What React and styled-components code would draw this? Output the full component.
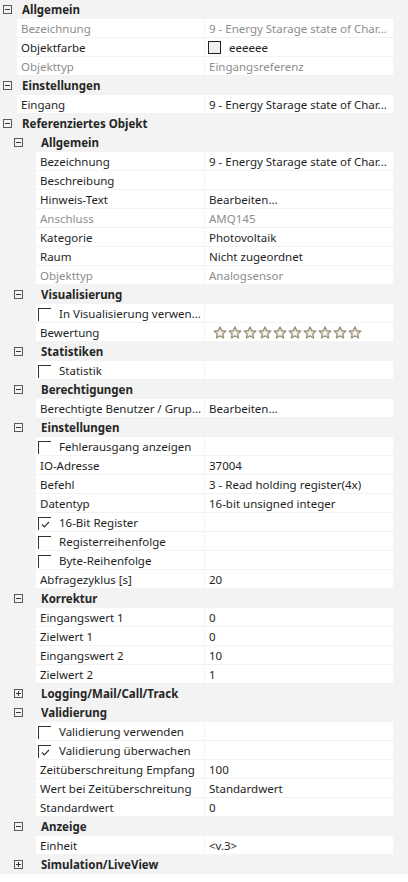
import styled, { createGlobalStyle } from "styled-components";

const GlobalStyle = createGlobalStyle`
  html, body {
    margin: 0;
    padding: 0;
    background: #f3f3f3;
  }
  body {
    font-family: 'Noto Sans', 'Open Sans', sans-serif;
    font-size: 11.5px;
    color: #1e1e1e;
  }
`;

const Grid = styled.div`
  width: 408px;
  height: 882px;
  overflow: hidden;
  display: flex;
  flex-direction: column;
  background: #f3f3f3;
`;

const Row = styled.div`
  display: flex;
  height: 19px;
  width: 393px;
  flex-shrink: 0;
`;

const Gutter = styled.div`
  width: ${({ indent }) => indent}px;
  flex-shrink: 0;
  display: flex;
  align-items: center;
  justify-content: center;
  padding-right: ${({ header }) => (header ? 3 : 0)}px;
  box-sizing: border-box;
`;

const HeaderLabel = styled.div`
  flex: 1;
  display: flex;
  align-items: center;
  font-weight: 700;
  color: #262626;
  padding-left: 5px;
  height: 18px;
  white-space: nowrap;
`;

const LabelCell = styled.div`
  flex: 1;
  min-width: 0;
  height: 18px;
  background: #fff;
  display: flex;
  align-items: center;
  padding-left: 4px;
  white-space: nowrap;
  overflow: hidden;
  color: ${({ disabled }) => (disabled ? "#8d8d8d" : "#1e1e1e")};
`;

const ValueCell = styled.div`
  width: 188px;
  flex-shrink: 0;
  margin-left: 1px;
  height: 18px;
  background: #fff;
  display: flex;
  align-items: center;
  padding-left: 4px;
  box-sizing: border-box;
  white-space: nowrap;
  overflow: hidden;
  color: ${({ disabled }) => (disabled ? "#8d8d8d" : "#1e1e1e")};
`;

const Expander = styled.span`
  width: 9px;
  height: 9px;
  border: 1px solid #5a5a5a;
  box-sizing: border-box;
  position: relative;
  margin-left: ${({ nested }) => (nested ? 4 : 0)}px;

  &::before {
    content: "";
    position: absolute;
    left: 1px;
    right: 1px;
    top: 3px;
    height: 1px;
    background: #3a3a3a;
  }

  &::after {
    content: "";
    display: ${({ open }) => (open ? "none" : "block")};
    position: absolute;
    top: 1px;
    bottom: 1px;
    left: 3px;
    width: 1px;
    background: #3a3a3a;
  }
`;

const CheckBox = styled.span`
  width: 13px;
  height: 13px;
  flex-shrink: 0;
  border-top: 1px solid #333;
  border-left: 1px solid #333;
  box-sizing: border-box;
  margin-left: -2px;
  margin-right: 8px;
  margin-top: 4px;
  align-self: flex-start;
  display: flex;
  align-items: center;
  justify-content: center;
`;

const Swatch = styled.span`
  width: 13px;
  height: 13px;
  border: 1px solid #222;
  background: #eeeeee;
  box-sizing: border-box;
  margin-left: -1px;
  margin-right: 8px;
`;

const Stars = styled.div`
  display: flex;
  gap: 1px;
  padding-left: 4px;
`;

const Tail = styled.div`
  flex: 1;
  background: #fff;
`;

function Star() {
  return (
    <svg width="14" height="13" viewBox="0 0 14 13">
      <path
        d="M7 0.8 L8.8 4.6 L13 5.1 L9.9 7.9 L10.7 12.1 L7 10 L3.3 12.1 L4.1 7.9 L1 5.1 L5.2 4.6 Z"
        fill="#d9d3c3"
        stroke="#958c78"
        strokeWidth="1.1"
        strokeLinejoin="round"
      />
      <path d="M7 4.5 L8 6.4 L9.8 6.7 L8.5 7.9 L8.8 9.8 L7 8.8 L5.2 9.8 L5.5 7.9 L4.2 6.7 L6 6.4 Z" fill="#fbfaf6" />
    </svg>
  );
}

function Check() {
  return (
    <svg width="11" height="11" viewBox="0 0 11 11">
      <path d="M2 5.5 L4.3 7.8 L9 3" fill="none" stroke="#333" strokeWidth="1.2" />
    </svg>
  );
}

const rows = [
  { h: "Allgemein", lvl: 0 },
  { l: "Bezeichnung", v: "9 - Energy Starage state of Char...", dis: true },
  { l: "Objektfarbe", v: "eeeeee", swatch: true },
  { l: "Objekttyp", v: "Eingangsreferenz", dis: true },
  { h: "Einstellungen", lvl: 0 },
  { l: "Eingang", v: "9 - Energy Starage state of Char..." },
  { h: "Referenziertes Objekt", lvl: 0 },
  { h: "Allgemein", lvl: 1 },
  { l: "Bezeichnung", v: "9 - Energy Starage state of Char...", lvl: 1 },
  { l: "Beschreibung", v: "", lvl: 1 },
  { l: "Hinweis-Text", v: "Bearbeiten...", lvl: 1 },
  { l: "Anschluss", v: "AMQ145", lvl: 1, dis: true },
  { l: "Kategorie", v: "Photovoltaik", lvl: 1 },
  { l: "Raum", v: "Nicht zugeordnet", lvl: 1 },
  { l: "Objekttyp", v: "Analogsensor", lvl: 1, dis: true },
  { h: "Visualisierung", lvl: 1 },
  { l: "In Visualisierung verwen...", cb: false, lvl: 1 },
  { l: "Bewertung", stars: true, lvl: 1 },
  { h: "Statistiken", lvl: 1 },
  { l: "Statistik", cb: false, lvl: 1 },
  { h: "Berechtigungen", lvl: 1 },
  { l: "Berechtigte Benutzer / Grup...", v: "Bearbeiten...", lvl: 1 },
  { h: "Einstellungen", lvl: 1 },
  { l: "Fehlerausgang anzeigen", cb: false, lvl: 1 },
  { l: "IO-Adresse", v: "37004", lvl: 1 },
  { l: "Befehl", v: "3 - Read holding register(4x)", lvl: 1 },
  { l: "Datentyp", v: "16-bit unsigned integer", lvl: 1 },
  { l: "16-Bit Register", cb: true, lvl: 1 },
  { l: "Registerreihenfolge", cb: false, lvl: 1 },
  { l: "Byte-Reihenfolge", cb: false, lvl: 1 },
  { l: "Abfragezyklus [s]", v: "20", lvl: 1 },
  { h: "Korrektur", lvl: 1 },
  { l: "Eingangswert 1", v: "0", lvl: 1 },
  { l: "Zielwert 1", v: "0", lvl: 1 },
  { l: "Eingangswert 2", v: "10", lvl: 1 },
  { l: "Zielwert 2", v: "1", lvl: 1 },
  { h: "Logging/Mail/Call/Track", lvl: 1, closed: true },
  { h: "Validierung", lvl: 1 },
  { l: "Validierung verwenden", cb: false, lvl: 1 },
  { l: "Validierung überwachen", cb: true, lvl: 1 },
  { l: "Zeitüberschreitung Empfang", v: "100", lvl: 1 },
  { l: "Wert bei Zeitüberschreitung", v: "Standardwert", lvl: 1 },
  { l: "Standardwert", v: "0", lvl: 1 },
  { h: "Anzeige", lvl: 1 },
  { l: "Einheit", v: "<v.3>", lvl: 1 },
  { h: "Simulation/LiveView", lvl: 1, closed: true },
];

export default function App() {
  return (
    <>
      <GlobalStyle />
      <Grid>
        {rows.map((r, i) => {
          if (r.h) {
            return (
              <Row key={i}>
                <Gutter indent={r.lvl ? 36 : 17} header>
                  <Expander open={!r.closed} nested={r.lvl} />
                </Gutter>
                <HeaderLabel>{r.h}</HeaderLabel>
              </Row>
            );
          }
          const indent = r.lvl ? 36 : 17;
          if (r.cb !== undefined) {
            return (
              <Row key={i}>
                <Gutter indent={indent} />
                <LabelCell>
                  <CheckBox>{r.cb && <Check />}</CheckBox>
                  {r.l}
                </LabelCell>
                <ValueCell />
              </Row>
            );
          }
          return (
            <Row key={i}>
              <Gutter indent={indent} />
              <LabelCell disabled={r.dis}>{r.l}</LabelCell>
              <ValueCell disabled={r.dis}>
                {r.swatch && <Swatch />}
                {r.stars ? (
                  <Stars>
                    {Array.from({ length: 10 }).map((_, k) => (
                      <Star key={k} />
                    ))}
                  </Stars>
                ) : (
                  r.v
                )}
              </ValueCell>
            </Row>
          );
        })}
        <Tail />
      </Grid>
    </>
  );
}
